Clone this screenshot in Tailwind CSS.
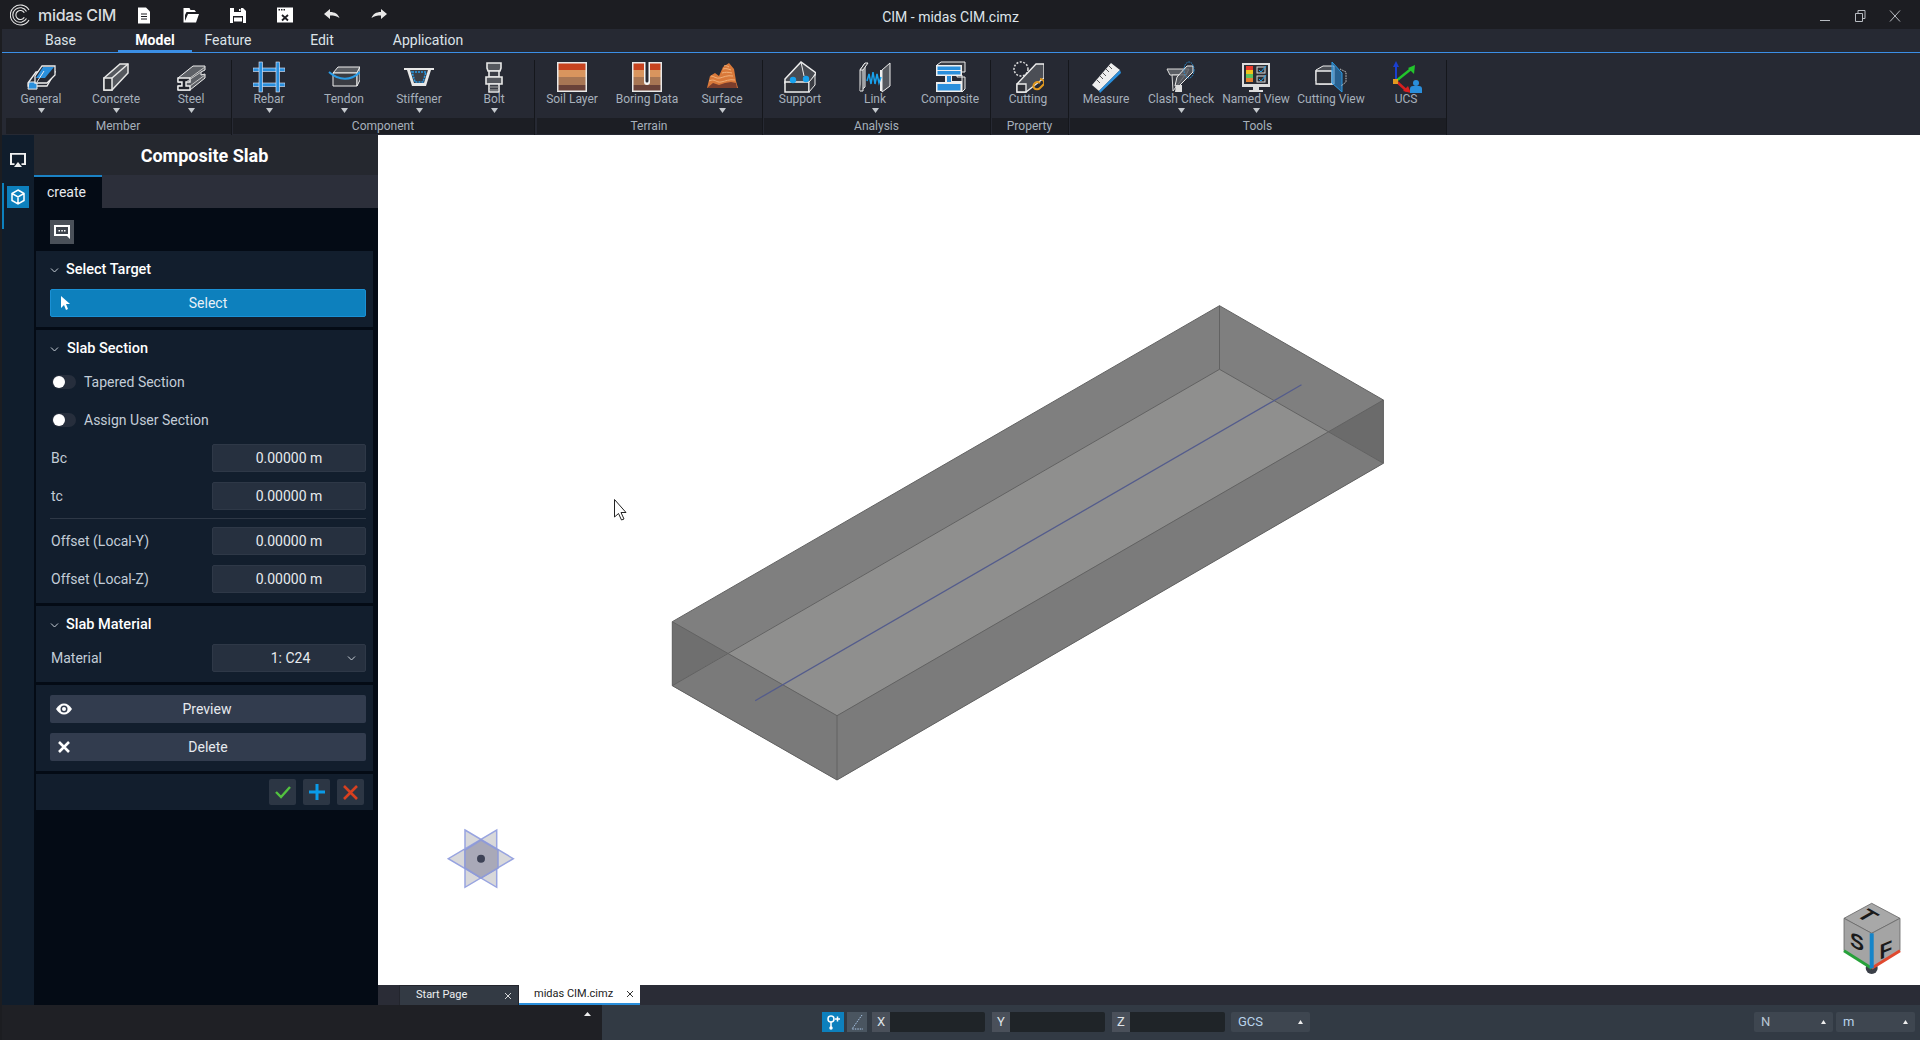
<!DOCTYPE html>
<html lang="en">
<head>
<meta charset="UTF-8">
<title>CIM - midas CIM.cimz</title>
<script src="https://cdn.jsdelivr.net/npm/@tailwindcss/browser@4"></script>
</head>
<body class="bg-[#1c1d21] overflow-hidden">
<div class="w-[1920px] h-[1040px] flex flex-col font-['Roboto',sans-serif] text-[#c3cdd8]">

  <!-- title bar -->
  <div class="h-[29px] flex items-center bg-[#1c1d22] shrink-0">
    <div class="flex-1 flex items-center">
      <div class="w-[135px] flex items-center pl-[10px] gap-[6px]">
        <svg width="22" height="22" viewBox="0 0 22 22" fill="none" stroke="#e6e6e6" stroke-width="1.1"><path d="M19 6A10 10 0 1 0 19 16"/><path d="M16.5 7.5A7.3 7.3 0 1 0 16.5 14.5"/><path d="M14.3 8.8A4.5 4.5 0 1 0 14.3 13.2"/></svg>
        <span class="text-[16px] font-medium tracking-[-0.3px] text-[#d9dcdf] font-['Inter',sans-serif]">midas CIM</span>
      </div>
      <div class="flex items-center gap-[29px]">
        <svg width="18" height="18" viewBox="0 0 18 18"><path d="M3 1.5h8l4 4v12H3z" fill="#fff"/><path d="M6 8h6M6 10.5h6M6 13h6" stroke="#1c1d22"/></svg>
        <svg width="18" height="18" viewBox="0 0 18 18"><path d="M1.5 2h6l1 2h4l1.500 2H4.500L3 9v6l3-7h11l-3 8.500H1.500z" fill="#fff"/></svg>
        <svg width="18" height="18" viewBox="0 0 18 18"><path d="M1 2h13l3 3v12H1z" fill="#fff"/><path d="M5 2h7v4H5zM4 10h10v7H4z" fill="#1c1d22"/><path d="M10 3h1.500v2H10z" fill="#fff"/><path d="M5 11.500h8v4H5z" fill="#fff"/></svg>
        <svg width="18" height="18" viewBox="0 0 18 18"><path d="M1 1.500h16v15H1z" fill="#fff"/><path d="M2.500 3h1.500v1.500H2.500zM5 3h1.500v1.500H5zM7.500 3H9v1.500H7.500z" fill="#1c1d22"/><path d="M6 9l6 5.500M12 9l-6 5.500" stroke="#1c1d22" stroke-width="1.800"/></svg>
        <svg width="18" height="18" viewBox="0 0 18 18"><path d="M1 8l6-5v3c5 0 8 2 9.500 6-3-2-5.500-2.500-9.500-2.500V13z" fill="#e8e8e8"/></svg>
        <svg width="18" height="18" viewBox="0 0 18 18"><path d="M17 8l-6-5v3c-5 0-8 2-9.500 6 3-2 5.500-2.500 9.500-2.500V13z" fill="#e8e8e8"/></svg>
      </div>
    </div>
    <div class="text-[14px] text-[#dfe5ea] pt-[5px]">CIM - midas CIM.cimz</div>
    <div class="flex-1 flex justify-end items-center gap-[23px] pr-[19px] pt-[2px]">
      <svg width="12" height="12" viewBox="0 0 12 12" stroke="#b8bcc2" fill="none"><path d="M1 10.500h10"/></svg>
      <svg width="12" height="12" viewBox="0 0 12 12" stroke="#b8bcc2" fill="none"><path d="M1.500 3.500h7v8h-7zM4 3.500V.5h7v8H8.500"/></svg>
      <svg width="12" height="12" viewBox="0 0 12 12" stroke="#b8bcc2" fill="none"><path d="M1 .5l10 11M11 .5l-10 11"/></svg>
    </div>
  </div>

  <div class="flex-1 flex flex-col pl-[2px] min-h-0">
    <!-- ribbon tabs -->
    <div class="h-[24px] shrink-0 bg-[#262933] border-b border-[#3b8fe6] relative flex items-end text-[14px] text-[#dde3e8] pb-[1px]">
      <div class="w-[116px] h-[22px] flex justify-center items-center pl-[1px]">Base</div>
      <div class="w-[74px] h-[22px] flex justify-center items-center font-bold text-white border-b-2 border-[#3b8fe6] -mb-[1px]">Model</div>
      <div class="w-[62px] ml-[5px] text-center h-[22px] flex justify-center items-center mr-[4px]">Feature</div>
      <div class="w-[60px] h-[22px] flex justify-center items-center ml-[29px]">Edit</div>
      <div class="w-[90px] h-[22px] flex justify-center items-center ml-[31px]">Application</div>
    </div>

    <!-- ribbon -->
    <div class="h-[82px] shrink-0 bg-[#262933] flex pl-[1.5px] text-[12px] text-[#a6b0bb]">

      <div class="mt-[7px] h-[75px] w-[228px] border-r border-[#15171c] flex flex-col">
        <div class="h-[58px] pt-[1px] flex">
          <div class="w-[75px] flex flex-col items-center">
            <svg width="32" height="32" viewBox="0 0 32 32"><path d="M3 22l8-11h19l-8 14H3z" fill="#262933" stroke="#eee" stroke-width="1.300"/><path d="M4 21h9l-1 .1v7H3z" fill="#2a8fdc" stroke="#eee"/><path d="M17 5h13v9l-8 8H10v-7z" fill="#262933" stroke="#eee" stroke-width="1.300"/><path d="M18 6h11l-9 11h-9z" fill="#2a8fdc"/><path d="M12 21l7-11" stroke="#eee"/></svg>
            <div class="leading-[14px] -mt-[1px]">General</div>
            <svg class="mt-[2px]" width="7" height="5" viewBox="0 0 7 5"><path d="M0 0h7L3.500 5z" fill="#c4c8cd"/></svg>
          </div>
          <div class="w-[75px] flex flex-col items-center">
            <svg width="32" height="32" viewBox="0 0 32 32"><path d="M4 17L20 3h8v9L12 29H4z" fill="#55585e" stroke="#e8e8e8" stroke-width="1.500"/><path d="M4 17h8v12H4z" fill="#2f3137" stroke="#e8e8e8" stroke-width="1.500"/><path d="M12 17L28 3" stroke="#e8e8e8" stroke-width="1.500"/></svg>
            <div class="leading-[14px] -mt-[1px]">Concrete</div>
            <svg class="mt-[2px]" width="7" height="5" viewBox="0 0 7 5"><path d="M0 0h7L3.500 5z" fill="#c4c8cd"/></svg>
          </div>
          <div class="w-[75px] flex flex-col items-center">
            <svg width="32" height="32" viewBox="0 0 32 32"><path d="M3 17L18 5h12v4l-4 2v3l4-1v4L15 29H3v-4h4v-4H3z" fill="#5d6066" stroke="#eee"/><path d="M3 17h12v4h-4v4h4v4H3v-4h4v-4H3z" fill="#20222a" stroke="#eee" stroke-width="1.400"/><path d="M15 17L30 6M11 21l15-10M15 25l15-11" stroke="#c8c8c8"/></svg>
            <div class="leading-[14px] -mt-[1px]">Steel</div>
            <svg class="mt-[2px]" width="7" height="5" viewBox="0 0 7 5"><path d="M0 0h7L3.500 5z" fill="#c4c8cd"/></svg>
          </div>
        </div>
        <div class="h-[16px] ml-[2px] bg-[#1c1e24] text-center leading-[16px]">Member</div>
      </div>

      <div class="mt-[7px] h-[75px] w-[303px] border-r border-[#15171c] flex flex-col">
        <div class="h-[58px] pt-[1px] flex">
          <div class="w-[75px] flex flex-col items-center">
            <svg width="32" height="32" viewBox="0 0 32 32"><g fill="#2a8fdc" stroke="#eef" stroke-width=".6"><rect x="0" y="7" width="32" height="3.500"/><rect x="0" y="22" width="32" height="3.500"/><rect x="6" y="1" width="3.500" height="30"/><rect x="23" y="1" width="3.500" height="30"/></g></svg>
            <div class="leading-[14px] -mt-[1px]">Rebar</div>
            <svg class="mt-[2px]" width="7" height="5" viewBox="0 0 7 5"><path d="M0 0h7L3.500 5z" fill="#c4c8cd"/></svg>
          </div>
          <div class="w-[75px] flex flex-col items-center">
            <svg width="32" height="32" viewBox="0 0 32 32"><path d="M5 12l5-6h22l-3 6z" fill="#5a5d63" stroke="#eee"/><path d="M5 12h24v13H5z" fill="#3a3c43" stroke="#eee"/><path d="M29 12l3-6v13l-3 6z" fill="#4a4c53" stroke="#eee"/><path d="M1 11c10 9 22 9 31 0" stroke="#2a9be6" stroke-width="2" fill="none"/></svg>
            <div class="leading-[14px] -mt-[1px]">Tendon</div>
            <svg class="mt-[2px]" width="7" height="5" viewBox="0 0 7 5"><path d="M0 0h7L3.500 5z" fill="#c4c8cd"/></svg>
          </div>
          <div class="w-[75px] flex flex-col items-center">
            <svg width="32" height="32" viewBox="0 0 32 32"><path d="M1 7h30v2h-3l-5 16H9L4 9H1z" fill="#e8e8e8"/><path d="M7 9h18l-4 13H11z" fill="#3b3e46"/><path d="M9 11h14l-3 10h-8z" fill="none" stroke="#2a9be6" stroke-width="1.600" stroke-dasharray="2 1"/></svg>
            <div class="leading-[14px] -mt-[1px]">Stiffener</div>
            <svg class="mt-[2px]" width="7" height="5" viewBox="0 0 7 5"><path d="M0 0h7L3.500 5z" fill="#c4c8cd"/></svg>
          </div>
          <div class="w-[75px] flex flex-col items-center">
            <svg width="32" height="32" viewBox="0 0 32 32"><g stroke="#e8e8e8" stroke-width="1.600"><path d="M9 2h14v5l-1 3H10L9 7z" fill="#55585e"/><path d="M11 10h10v6H11z" fill="#3b3e46"/><path d="M8 16h16v7H8z" fill="#55585e"/><path d="M11 23h10v8H11z" fill="#3b3e46"/></g><path d="M11 26h10M11 29h10" stroke="#aaa"/></svg>
            <div class="leading-[14px] -mt-[1px]">Bolt</div>
            <svg class="mt-[2px]" width="7" height="5" viewBox="0 0 7 5"><path d="M0 0h7L3.500 5z" fill="#c4c8cd"/></svg>
          </div>
        </div>
        <div class="h-[16px] ml-[1px] bg-[#1c1e24] text-center leading-[16px]">Component</div>
      </div>

      <div class="mt-[7px] h-[75px] w-[228px] border-r border-[#15171c] flex flex-col">
        <div class="h-[58px] pt-[1px] flex">
          <div class="w-[75px] flex flex-col items-center">
            <svg width="32" height="32" viewBox="0 0 32 32"><rect x="1" y="1" width="30" height="30" fill="#e8e8e8"/><rect x="2.500" y="2.500" width="27" height="6.500" fill="#c8431f"/><rect x="2.500" y="9" width="27" height="7" fill="#d9955e"/><rect x="2.500" y="16" width="27" height="8" fill="#a87654"/><rect x="2.500" y="24" width="27" height="5.500" fill="#6a4239"/></svg>
            <div class="leading-[14px] -mt-[1px]">Soil Layer</div>
          </div>
          <div class="w-[75px] flex flex-col items-center">
            <svg width="32" height="32" viewBox="0 0 32 32"><rect x="1" y="1" width="30" height="30" fill="#e8e8e8"/><rect x="2.500" y="2.500" width="27" height="6.500" fill="#c8431f"/><rect x="2.500" y="9" width="27" height="7" fill="#d9955e"/><rect x="2.500" y="16" width="27" height="8" fill="#a87654"/><rect x="2.500" y="24" width="27" height="5.500" fill="#6a4239"/><path d="M13 1h6v20a3 3 0 0 1-6 0z" fill="#f4f4f4"/><path d="M14.500 1h3v19a1.500 1.500 0 0 1-3 0z" fill="#262933"/></svg>
            <div class="leading-[14px] -mt-[1px]">Boring Data</div>
          </div>
          <div class="w-[75px] flex flex-col items-center">
            <svg width="32" height="32" viewBox="0 0 32 32"><path d="M1 27l3-12 5-3 4 3 4-9 6-4 5 6 2 12 2 7z" fill="#d9793a"/><path d="M1 27l30 0-1-5-5-1-6 1-6 2-6-2z" fill="#7a3d2c"/><path d="M3 20c6-3 7 2 12 1s8-3 14-2M5 15c3 0 5 3 9 2s7-3 13-2M17 8c3-1 5 0 8 1M18 5c2-1 3 0 5 1M16 12c3-1 6-1 10 0" stroke="#f1b079" fill="none"/></svg>
            <div class="leading-[14px] -mt-[1px]">Surface</div>
            <svg class="mt-[2px]" width="7" height="5" viewBox="0 0 7 5"><path d="M0 0h7L3.500 5z" fill="#c4c8cd"/></svg>
          </div>
        </div>
        <div class="h-[16px] ml-[2px] bg-[#1c1e24] text-center leading-[16px]">Terrain</div>
      </div>

      <div class="mt-[7px] h-[75px] w-[228px] border-r border-[#15171c] flex flex-col">
        <div class="h-[58px] pt-[1px] flex">
          <div class="w-[75px] flex flex-col items-center">
            <svg width="32" height="32" viewBox="0 0 32 32"><path d="M1 18L17 1l15 11-6 10H1z" fill="#484b52" stroke="#eee" stroke-width="1.500"/><path d="M17 1l3 14" stroke="#eee"/><path d="M1 21h24v10H1z" fill="#2e3037" stroke="#eee" stroke-width="1.500"/><path d="M25 21l6-7v10l-6 7z" fill="#3a3c43" stroke="#eee"/><circle cx="9" cy="19" r="3.200" fill="#18a2ee"/><circle cx="22" cy="18" r="3.200" fill="#18a2ee"/></svg>
            <div class="leading-[14px] -mt-[1px]">Support</div>
          </div>
          <div class="w-[75px] flex flex-col items-center">
            <svg width="32" height="32" viewBox="0 0 32 32"><path d="M1 9l5-7v24l-5 4z" fill="#55585e" stroke="#eee"/><path d="M1 9h3l5-7H6zM4 9v21H1" fill="#3a3c43" stroke="#eee"/><path d="M23 9l8-7v23l-8 6z" fill="#55585e" stroke="#eee"/><path d="M23 9h-2v21h2z" fill="#eee"/><path d="M8 20l2-7 2 10 2-12 2 12 2-10 2 9 2-6" stroke="#18a2ee" stroke-width="1.500" fill="none"/></svg>
            <div class="leading-[14px] -mt-[1px]">Link</div>
            <svg class="mt-[2px]" width="7" height="5" viewBox="0 0 7 5"><path d="M0 0h7L3.500 5z" fill="#c4c8cd"/></svg>
          </div>
          <div class="w-[75px] flex flex-col items-center">
            <svg width="32" height="32" viewBox="0 0 32 32"><path d="M3 4L7 1h24v10h-8v5h8v12l-3 3V14z" fill="#3a3c43" stroke="#eee"/><path d="M2 4h26v11H18v5h10v11H2V21h9v-1H11v-5H2z" fill="#eee"/><path d="M3.500 5.500h23V9h-23zM3.500 10h23v3.500h-23zM13 15h4v6h-4zM3.500 23h23v6.500h-23z" fill="#2a8fdc"/></svg>
            <div class="leading-[14px] -mt-[1px]">Composite</div>
          </div>
        </div>
        <div class="h-[16px] ml-[1px] bg-[#1c1e24] text-center leading-[16px]">Analysis</div>
      </div>

      <div class="mt-[7px] h-[75px] w-[78px] border-r border-[#15171c] flex flex-col">
        <div class="h-[58px] pt-[1px] flex">
          <div class="w-[75px] flex flex-col items-center">
            <svg width="32" height="32" viewBox="0 0 32 32"><circle cx="9" cy="8" r="7" fill="none" stroke="#ddd" stroke-width="1.500" stroke-dasharray="2 1.500"/><path d="M5 23L24 3h8v14L14 31H5z" fill="#4b4e55" stroke="#eee" stroke-width="1.300"/><path d="M5 23h9v8H5z" fill="#2e3037" stroke="#eee" stroke-width="1.300"/><path d="M22 27a4 4 0 0 1 6-5M28 18a4 4 0 0 1 4 5l-4 4a4 4 0 0 1-6 0" stroke="#e39a1f" stroke-width="2" fill="none"/></svg>
            <div class="leading-[14px] -mt-[1px]">Cutting</div>
          </div>
        </div>
        <div class="h-[16px] ml-[1px] bg-[#1c1e24] text-center leading-[16px]">Property</div>
      </div>

      <div class="mt-[7px] h-[75px] w-[378px] border-r border-[#15171c] flex flex-col">
        <div class="h-[58px] pt-[1px] flex">
          <div class="w-[75px] flex flex-col items-center">
            <svg width="32" height="32" viewBox="0 0 32 32"><path d="M2 24L21 2l9 7L9 30z" fill="#eee"/><path d="M9 30L30 9l1 3L10 32z" fill="#2a8fdc"/><path d="M7 19l3 3M10 15l3 3M13 12l3 3M16 8l3 3M19 5l3 3" stroke="#555" stroke-width="1"/></svg>
            <div class="leading-[14px] -mt-[1px]">Measure</div>
          </div>
          <div class="w-[75px] flex flex-col items-center">
            <svg width="32" height="32" viewBox="0 0 32 32"><path d="M2 8h22l-3 6H5z" fill="#5a5d63" stroke="#ddd"/><path d="M7 14h13L8 30z" fill="#3a3c43" stroke="#ddd"/><path d="M12 16L22 5h6v6L14 25h-4z" fill="#5a5d63" fill-opacity=".8" stroke="#eee"/><path d="M11 24h6v7h-7z" fill="#ddd"/><ellipse cx="24" cy="9" rx="5" ry="8" fill="none" stroke="#2a9be6" stroke-dasharray="1.500 1"/></svg>
            <div class="leading-[14px] -mt-[1px]">Clash Check</div>
            <svg class="mt-[2px]" width="7" height="5" viewBox="0 0 7 5"><path d="M0 0h7L3.500 5z" fill="#c4c8cd"/></svg>
          </div>
          <div class="w-[75px] flex flex-col items-center">
            <svg width="32" height="32" viewBox="0 0 32 32"><rect x="2" y="2" width="28" height="24" fill="#ddd"/><rect x="4" y="4" width="24" height="19" fill="#2a2c33"/><path d="M6 5h7v4H6z" fill="#e8392a"/><path d="M6 9h7v4H6z" fill="#f1c21b"/><path d="M6 13h7v4H6z" fill="#5dc05a"/><path d="M6 17h7v4H6z" fill="#e57f2e"/><rect x="17" y="6" width="8" height="6" fill="none" stroke="#ddd"/><rect x="17" y="15" width="8" height="6" fill="none" stroke="#ddd"/><path d="M19 9l2 2 5-6M19 18l2 2 5-6" stroke="#18a2ee" fill="none"/><path d="M13 26h6v3h-6zM9 29h14v2H9z" fill="#ddd"/></svg>
            <div class="leading-[14px] -mt-[1px]">Named View</div>
            <svg class="mt-[2px]" width="7" height="5" viewBox="0 0 7 5"><path d="M0 0h7L3.500 5z" fill="#c4c8cd"/></svg>
          </div>
          <div class="w-[75px] flex flex-col items-center">
            <svg width="32" height="32" viewBox="0 0 32 32"><path d="M1 9l7-4h11v18H4L1 20z" fill="#4b4e55" stroke="#eee"/><path d="M1 10h16v13H1z" fill="#2e3037" stroke="#eee" stroke-width="1.300"/><path d="M17 1l10 11v19L17 22z" fill="#2a8fdc" fill-opacity=".55" stroke="#2a9be6"/><path d="M25 8l6 3v10l-5 4" stroke="#ccc" fill="none" stroke-dasharray="1.500 1"/></svg>
            <div class="leading-[14px] -mt-[1px]">Cutting View</div>
          </div>
          <div class="w-[75px] flex flex-col items-center">
            <svg width="32" height="32" viewBox="0 0 32 32"><path d="M6 20V4" stroke="#1a3fd0" stroke-width="2"/><path d="M6 0l3 6H3z" fill="#1a3fd0"/><path d="M6 20L21 8" stroke="#22c52c" stroke-width="2.500"/><path d="M25 4l-1 9-6-6z" fill="#22c52c"/><path d="M6 20l11 10" stroke="#d81f1f" stroke-width="2.500"/><path d="M21 32l-8-2 5-5z" fill="#d81f1f"/><rect x="3" y="18" width="5" height="5" fill="#e39a1f"/><circle cx="26" cy="22" r="3" fill="#2a8fdc"/><path d="M20 32v-4a3 3 0 0 1 3-3h6a3 3 0 0 1 3 3v4z" fill="#2a8fdc"/></svg>
            <div class="leading-[14px] -mt-[1px]">UCS</div>
          </div>
        </div>
        <div class="h-[16px] ml-[1px] bg-[#1c1e24] text-center leading-[16px]">Tools</div>
      </div>
    </div>

    <!-- middle -->
    <div class="flex-1 flex min-h-0">
      <!-- icon rail -->
      <div class="w-[32px] bg-[#101d2c] flex flex-col items-center shrink-0 relative">
        <svg class="mt-[15px]" width="20" height="20" viewBox="0 0 20 20"><path d="M2 3h16v12h-4.500v-1.800H16V4.800H4v8.400h2.500V15H2z" fill="#f0f0f0"/><path d="M10 12l4 5H6z" fill="#f0f0f0"/></svg>
        <div class="w-[22px] h-[22px] bg-[#0d80bd] mt-[16px] flex items-center justify-center">
          <svg width="16" height="16" viewBox="0 0 16 16" fill="none" stroke="#fff" stroke-width="1.500"><path d="M8 1l6 3.500v7L8 15l-6-3.500v-7zM2 4.500L8 8l6-3.500M8 8v7"/></svg>
        </div>
        <div class="absolute left-0 top-[48px] w-[2px] h-[46px] bg-[#0d80bd]"></div>
      </div>

      <!-- panel -->
      <div class="w-[344px] shrink-0 bg-[#040b15] flex flex-col">
        <div class="h-[40px] bg-[#25282f] flex items-center justify-center text-[18px] font-bold text-white pr-[3px]">Composite Slab</div>
        <div class="h-[33px] bg-[#2c2f3a] flex">
          <div class="w-[68px] bg-[#040b15] border-t-2 border-[#1b82c4] text-[14px] text-[#e6eaee] pl-[13px] pt-[5px]">create</div>
        </div>
        <div class="h-[40px] pl-[16px] pt-[12px]">
          <div class="w-[24px] h-[24px] bg-[#4a5058] flex items-center justify-center">
            <svg width="18" height="16" viewBox="0 0 18 16"><path d="M1 1h16v14l-3-3H1z" fill="#fff"/><path d="M3 3h12v7H3z" fill="#3d434b"/><path d="M5.500 6h1.500v1.500H5.500zM8.300 6h1.500v1.500H8.300zM11 6h1.500v1.500H11z" fill="#fff"/></svg>
          </div>
        </div>

        <div class="flex flex-col gap-[3px] ml-[2px] w-[337px] mt-[3px] text-[14px]">
          <!-- select target -->
          <div class="bg-[#121e2d] pl-[14px] pr-[7px] pt-[7px] pb-[10px]">
            <div class="h-[24px] flex items-center text-white font-medium text-[14.5px]">
              <svg class="ml-[0px] mr-[7px]" width="9" height="7" viewBox="0 0 9 7" fill="none" stroke="#c8d0d8"><path d="M1 1.500l3.500 3.500L8 1.500"/></svg>
              <span class="ml-[0px]">Select Target</span>
            </div>
            <div class="mt-[7px] h-[28px] bg-[#0d80bd] border border-[#1a90d4] rounded-[2px] flex items-center relative text-[#e8f1f7]">
              <svg class="absolute left-[9px]" width="12" height="16" viewBox="0 0 12 16"><path d="M1 1l9 8H6l2 5-2 1-2-5-3 3z" fill="#fff"/></svg>
              <span class="flex-1 text-center pl-[0px]">Select</span>
            </div>
          </div>

          <!-- slab section -->
          <div class="bg-[#121e2d] pl-[14px] pr-[7px] pt-[7px] pb-[10px]">
            <div class="h-[24px] flex items-center text-white font-medium text-[14.5px]">
              <svg class="mr-[8px]" width="9" height="7" viewBox="0 0 9 7" fill="none" stroke="#c8d0d8"><path d="M1 1.500l3.500 3.500L8 1.500"/></svg>
              <span>Slab Section</span>
            </div>
            <div class="mt-[7px] flex flex-col gap-[10px]">
              <div class="h-[28px] flex items-center">
                <div class="w-[24px] h-[14px] ml-[2px] rounded-full bg-[#262e3c] relative"><div class="absolute left-[1px] top-[1px] w-[12px] h-[12px] rounded-full bg-white"></div></div>
                <span class="ml-[8px]">Tapered Section</span>
              </div>
              <div class="h-[28px] flex items-center">
                <div class="w-[24px] h-[14px] ml-[2px] rounded-full bg-[#262e3c] relative"><div class="absolute left-[1px] top-[1px] w-[12px] h-[12px] rounded-full bg-white"></div></div>
                <span class="ml-[8px]">Assign User Section</span>
              </div>
              <div class="h-[28px] flex items-center justify-between">
                <span class="pl-[1px]">Bc</span>
                <div class="w-[154px] h-[28px] bg-[#26303f] border border-[#2e3847] rounded-[2px] flex items-center justify-center text-[#e6eaee]">0.00000 m</div>
              </div>
              <div class="h-[28px] flex items-center justify-between">
                <span class="pl-[1px]">tc</span>
                <div class="w-[154px] h-[28px] bg-[#26303f] border border-[#2e3847] rounded-[2px] flex items-center justify-center text-[#e6eaee]">0.00000 m</div>
              </div>
            </div>
            <div class="h-[1px] bg-[#2e3846] mt-[8px] mb-[8px]"></div>
            <div class="flex flex-col gap-[10px]">
              <div class="h-[28px] flex items-center justify-between">
                <span class="pl-[1px]">Offset (Local-Y)</span>
                <div class="w-[154px] h-[28px] bg-[#26303f] border border-[#2e3847] rounded-[2px] flex items-center justify-center text-[#e6eaee]">0.00000 m</div>
              </div>
              <div class="h-[28px] flex items-center justify-between">
                <span class="pl-[1px]">Offset (Local-Z)</span>
                <div class="w-[154px] h-[28px] bg-[#26303f] border border-[#2e3847] rounded-[2px] flex items-center justify-center text-[#e6eaee]">0.00000 m</div>
              </div>
            </div>
          </div>

          <!-- slab material -->
          <div class="bg-[#121e2d] pl-[14px] pr-[7px] pt-[7px] pb-[10px]">
            <div class="h-[24px] flex items-center text-white font-medium text-[14.5px]">
              <svg class="mr-[7px]" width="9" height="7" viewBox="0 0 9 7" fill="none" stroke="#c8d0d8"><path d="M1 1.500l3.500 3.500L8 1.500"/></svg>
              <span>Slab Material</span>
            </div>
            <div class="mt-[7px] h-[28px] flex items-center justify-between">
              <span class="pl-[1px]">Material</span>
              <div class="w-[154px] h-[28px] bg-[#26303f] border border-[#2e3847] rounded-[2px] flex items-center text-[#e6eaee] relative">
                <span class="flex-1 text-center pl-[3px]">1: C24</span>
                <svg class="absolute right-[9px]" width="9" height="7" viewBox="0 0 9 7" fill="none" stroke="#c8d0d8"><path d="M1 1.500l3.500 3.500L8 1.500"/></svg>
              </div>
            </div>
          </div>

          <!-- actions -->
          <div class="bg-[#121e2d] pl-[14px] pr-[7px] py-[10px] flex flex-col gap-[10px] text-[#e6eaee]">
            <div class="h-[28px] bg-[#323c4e] rounded-[2px] flex items-center relative">
              <svg class="absolute left-[5px]" width="18" height="14" viewBox="0 0 18 14"><path d="M1 7c2-3.500 5-5.500 8-5.500s6 2 8 5.500c-2 3.500-5 5.500-8 5.500S3 10.500 1 7z" fill="#fff"/><circle cx="9" cy="7" r="3.500" fill="#323c4e"/><circle cx="9" cy="7" r="2" fill="#fff"/></svg>
              <span class="flex-1 text-center pr-[2px]">Preview</span>
            </div>
            <div class="h-[28px] bg-[#323c4e] rounded-[2px] flex items-center relative">
              <svg class="absolute left-[8px]" width="12" height="12" viewBox="0 0 12 12" stroke="#fff" stroke-width="2.600"><path d="M1 1l10 10M11 1L1 11"/></svg>
              <span class="flex-1 text-center">Delete</span>
            </div>
          </div>

          <!-- footer -->
          <div class="h-[36px] bg-[#121e2d] flex items-center justify-end gap-[7px] pr-[9px]">
            <div class="w-[27px] h-[26px] bg-[#2c3644] rounded-[2px] flex items-center justify-center">
              <svg width="16" height="14" viewBox="0 0 16 14" fill="none" stroke="#52c23f" stroke-width="2.400"><path d="M1 7l5 5 9-10"/></svg>
            </div>
            <div class="w-[27px] h-[26px] bg-[#2c3644] rounded-[2px] flex items-center justify-center">
              <svg width="16" height="16" viewBox="0 0 16 16" stroke="#0a9be8" stroke-width="3"><path d="M8 0v16M0 8h16"/></svg>
            </div>
            <div class="w-[27px] h-[26px] bg-[#2c3644] rounded-[2px] flex items-center justify-center">
              <svg width="15" height="15" viewBox="0 0 15 15" stroke="#d8401f" stroke-width="2.600"><path d="M1 1l13 13M14 1L1 14"/></svg>
            </div>
          </div>
        </div>
      </div>

      <!-- viewport and document tabs -->
      <div class="flex-1 flex flex-col min-w-0">
        <div class="flex-1 bg-white relative">
          <svg class="absolute inset-0" width="1542" height="850" viewBox="378 135 1542 850">
            <!-- slab box -->
            <path d="M672.300 621.700L1219.500 305.700L1383.400 400V463.300L837 780L672.300 685.700Z" fill="#7f7f7f"/>
            <path d="M1219.500 369.300L1328.600 431.700L837 715.700L727.600 653.300Z" fill="#8f8f8e"/>
            <path d="M672.300 621.700L727.600 653.300L672.300 685.700Z" fill="#6f6f6f"/>
            <path d="M1383.400 400L1328.600 431.700L1383.400 463.300Z" fill="#6b6b6b"/>
            <path d="M672.300 685.700L727.600 653.300L837 715.700V780Z" fill="#7a7a7a"/>
            <path d="M837 715.700L1328.600 431.700L1383.400 463.300L837 780Z" fill="#7b7b7b"/>
            <g fill="none" stroke="#626262" stroke-width="1">
              <path d="M672.300 621.700L1219.500 305.700L1383.400 400V463.300L837 780L672.300 685.700Z"/>
              <path d="M672.300 621.700L837 715.700L1383.400 400M837 715.700V780M1219.500 305.700V369.300M672.300 685.700L1219.500 369.300L1383.400 463.300"/>
            </g>
            <path d="M755.200 700.700L1301.500 384.700" stroke="#545c8c" stroke-width="1.300"/>

            <!-- cursor -->
            <path d="M614.500 499.500V517L618.500 513.500L621.500 520L624 519L621 512.500H626Z" fill="#fff" stroke="#222" stroke-width="1"/>

            <!-- view star -->
            <path d="M465 830L513.300 858.700L465 887.300ZM496.700 830V887.300L448.300 858.700Z" fill="#d8d8da" stroke="#98a4e0" stroke-width="1.500"/>
            <path d="M481 840L498 850V868L481 878L465 868V850Z" fill="#a9a9b8" stroke="#8f9bd8" stroke-width="1.500"/>
            <circle cx="481" cy="858.700" r="4" fill="#3d4256"/>

            <!-- view cube -->
            <circle cx="1871.700" cy="968" r="6" fill="#3a3f48"/>
            <path d="M1871.700 903.300L1900 918.300L1871.700 933.300L1844 918.300Z" fill="#a8a8a8" stroke="#666" stroke-width=".8"/>
            <path d="M1844 918.300L1871.700 933.300V968.300L1844 950.700Z" fill="#a4a4a4" stroke="#666" stroke-width=".8"/>
            <path d="M1900 918.300L1871.700 933.300V968.300L1900 950.700Z" fill="#a4a4a4" stroke="#666" stroke-width=".8"/>
            <path d="M1844 950.700L1871.700 968.300" stroke="#27a13a" stroke-width="3"/>
            <path d="M1871.700 968.300L1900 950.700" stroke="#e0492f" stroke-width="3"/>
            <path d="M1871.700 933.300V968.300" stroke="#1585c9" stroke-width="4"/>
            <text transform="matrix(.87 .5 -.87 .5 1868 915)" font-family="Liberation Sans" font-weight="700" font-size="22" fill="#1a1a1a" text-anchor="middle" y="8">T</text>
            <text transform="matrix(1 .42 0 1 1857 949)" font-family="Liberation Sans" font-weight="700" font-size="21" fill="#1a1a1a" text-anchor="middle">S</text>
            <text transform="matrix(1 -.42 0 1 1886 957)" font-family="Liberation Sans" font-weight="700" font-size="21" fill="#1a1a1a" text-anchor="middle">F</text>
          </svg>
        </div>
        <div class="h-[20px] bg-[#2a2c36] flex pl-[21px] text-[11px] shrink-0">
          <div class="w-[120px] bg-[#333a44] border border-b-0 border-[#23252d] flex items-center text-[#eef0f2] pl-[16px] relative">
            <span>Start Page</span>
            <svg class="absolute right-[6px]" width="8" height="8" viewBox="0 0 8 8" stroke="#d4d6d8"><path d="M1 1l6 6M7 1L1 7"/></svg>
          </div>
          <div class="w-[121px] bg-white border-b-2 border-[#2a8fdc] flex items-center text-[#222] pl-[15px] relative">
            <span>midas CIM.cimz</span>
            <svg class="absolute right-[6px]" width="8" height="8" viewBox="0 0 8 8" stroke="#333"><path d="M1 1l6 6M7 1L1 7"/></svg>
          </div>
        </div>
      </div>
    </div>

    <!-- status bar -->
    <div class="h-[35px] shrink-0 flex text-[13px] text-[#c3d0dc]">
      <div class="w-[600px] bg-[#1f2025] flex justify-end pr-[11px] pt-[7px]">
        <svg width="7" height="4" viewBox="0 0 7 4"><path d="M0 4h7L3.500 0z" fill="#eee"/></svg>
      </div>
      <div class="flex-1 bg-[#323a44] flex items-center pl-[220px] pb-[2px]">
        <div class="w-[22px] h-[20px] bg-[#0d80bd] flex items-center justify-center">
          <svg width="14" height="16" viewBox="0 0 14 16" fill="none" stroke="#fff" stroke-width="1.500"><circle cx="5" cy="5" r="3"/><path d="M5 8v6M9 5h5M11.500 2.500v5"/><circle cx="5" cy="14" r="1" fill="#fff"/></svg>
        </div>
        <div class="w-[20px] h-[20px] bg-[#4a5560] ml-[3px] flex items-center justify-center">
          <svg width="14" height="16" viewBox="0 0 14 16" fill="none" stroke="#a9c6e8"><path d="M12 1L2 15h11" stroke-dasharray="1.500 1"/></svg>
        </div>
        <div class="w-[18px] h-[20px] bg-[#4a505a] ml-[5px] flex items-center justify-center text-[#dfe3e7]">X</div>
        <div class="w-[95px] h-[20px] bg-[#1f2428] rounded-r-[2px]"></div>
        <div class="w-[18px] h-[20px] bg-[#4a505a] ml-[7px] flex items-center justify-center text-[#dfe3e7]">Y</div>
        <div class="w-[95px] h-[20px] bg-[#1f2428] rounded-r-[2px]"></div>
        <div class="w-[18px] h-[20px] bg-[#4a505a] ml-[7px] flex items-center justify-center text-[#dfe3e7]">Z</div>
        <div class="w-[95px] h-[20px] bg-[#1f2428] rounded-r-[2px]"></div>
        <div class="w-[79px] h-[20px] bg-[#3e4650] ml-[6px] rounded-[2px] flex items-center justify-between pl-[7px] pr-[7px] text-[#b9d3ea]">
          <span>GCS</span>
          <svg width="5" height="4" viewBox="0 0 5 4"><path d="M0 4h5L2.500 0z" fill="#eee"/></svg>
        </div>
        <div class="w-[79px] h-[20px] bg-[#3e4650] ml-[444px] rounded-[2px] flex items-center justify-between pl-[7px] pr-[7px] text-[#b9c7d4]">
          <span>N</span>
          <svg width="5" height="4" viewBox="0 0 5 4"><path d="M0 4h5L2.500 0z" fill="#eee"/></svg>
        </div>
        <div class="w-[79px] h-[20px] bg-[#3e4650] ml-[3px] rounded-[2px] flex items-center justify-between pl-[7px] pr-[7px] text-[#b9d3ea]">
          <span>m</span>
          <svg width="5" height="4" viewBox="0 0 5 4"><path d="M0 4h5L2.500 0z" fill="#eee"/></svg>
        </div>
      </div>
    </div>
  </div>
</div>
</body>
</html>
